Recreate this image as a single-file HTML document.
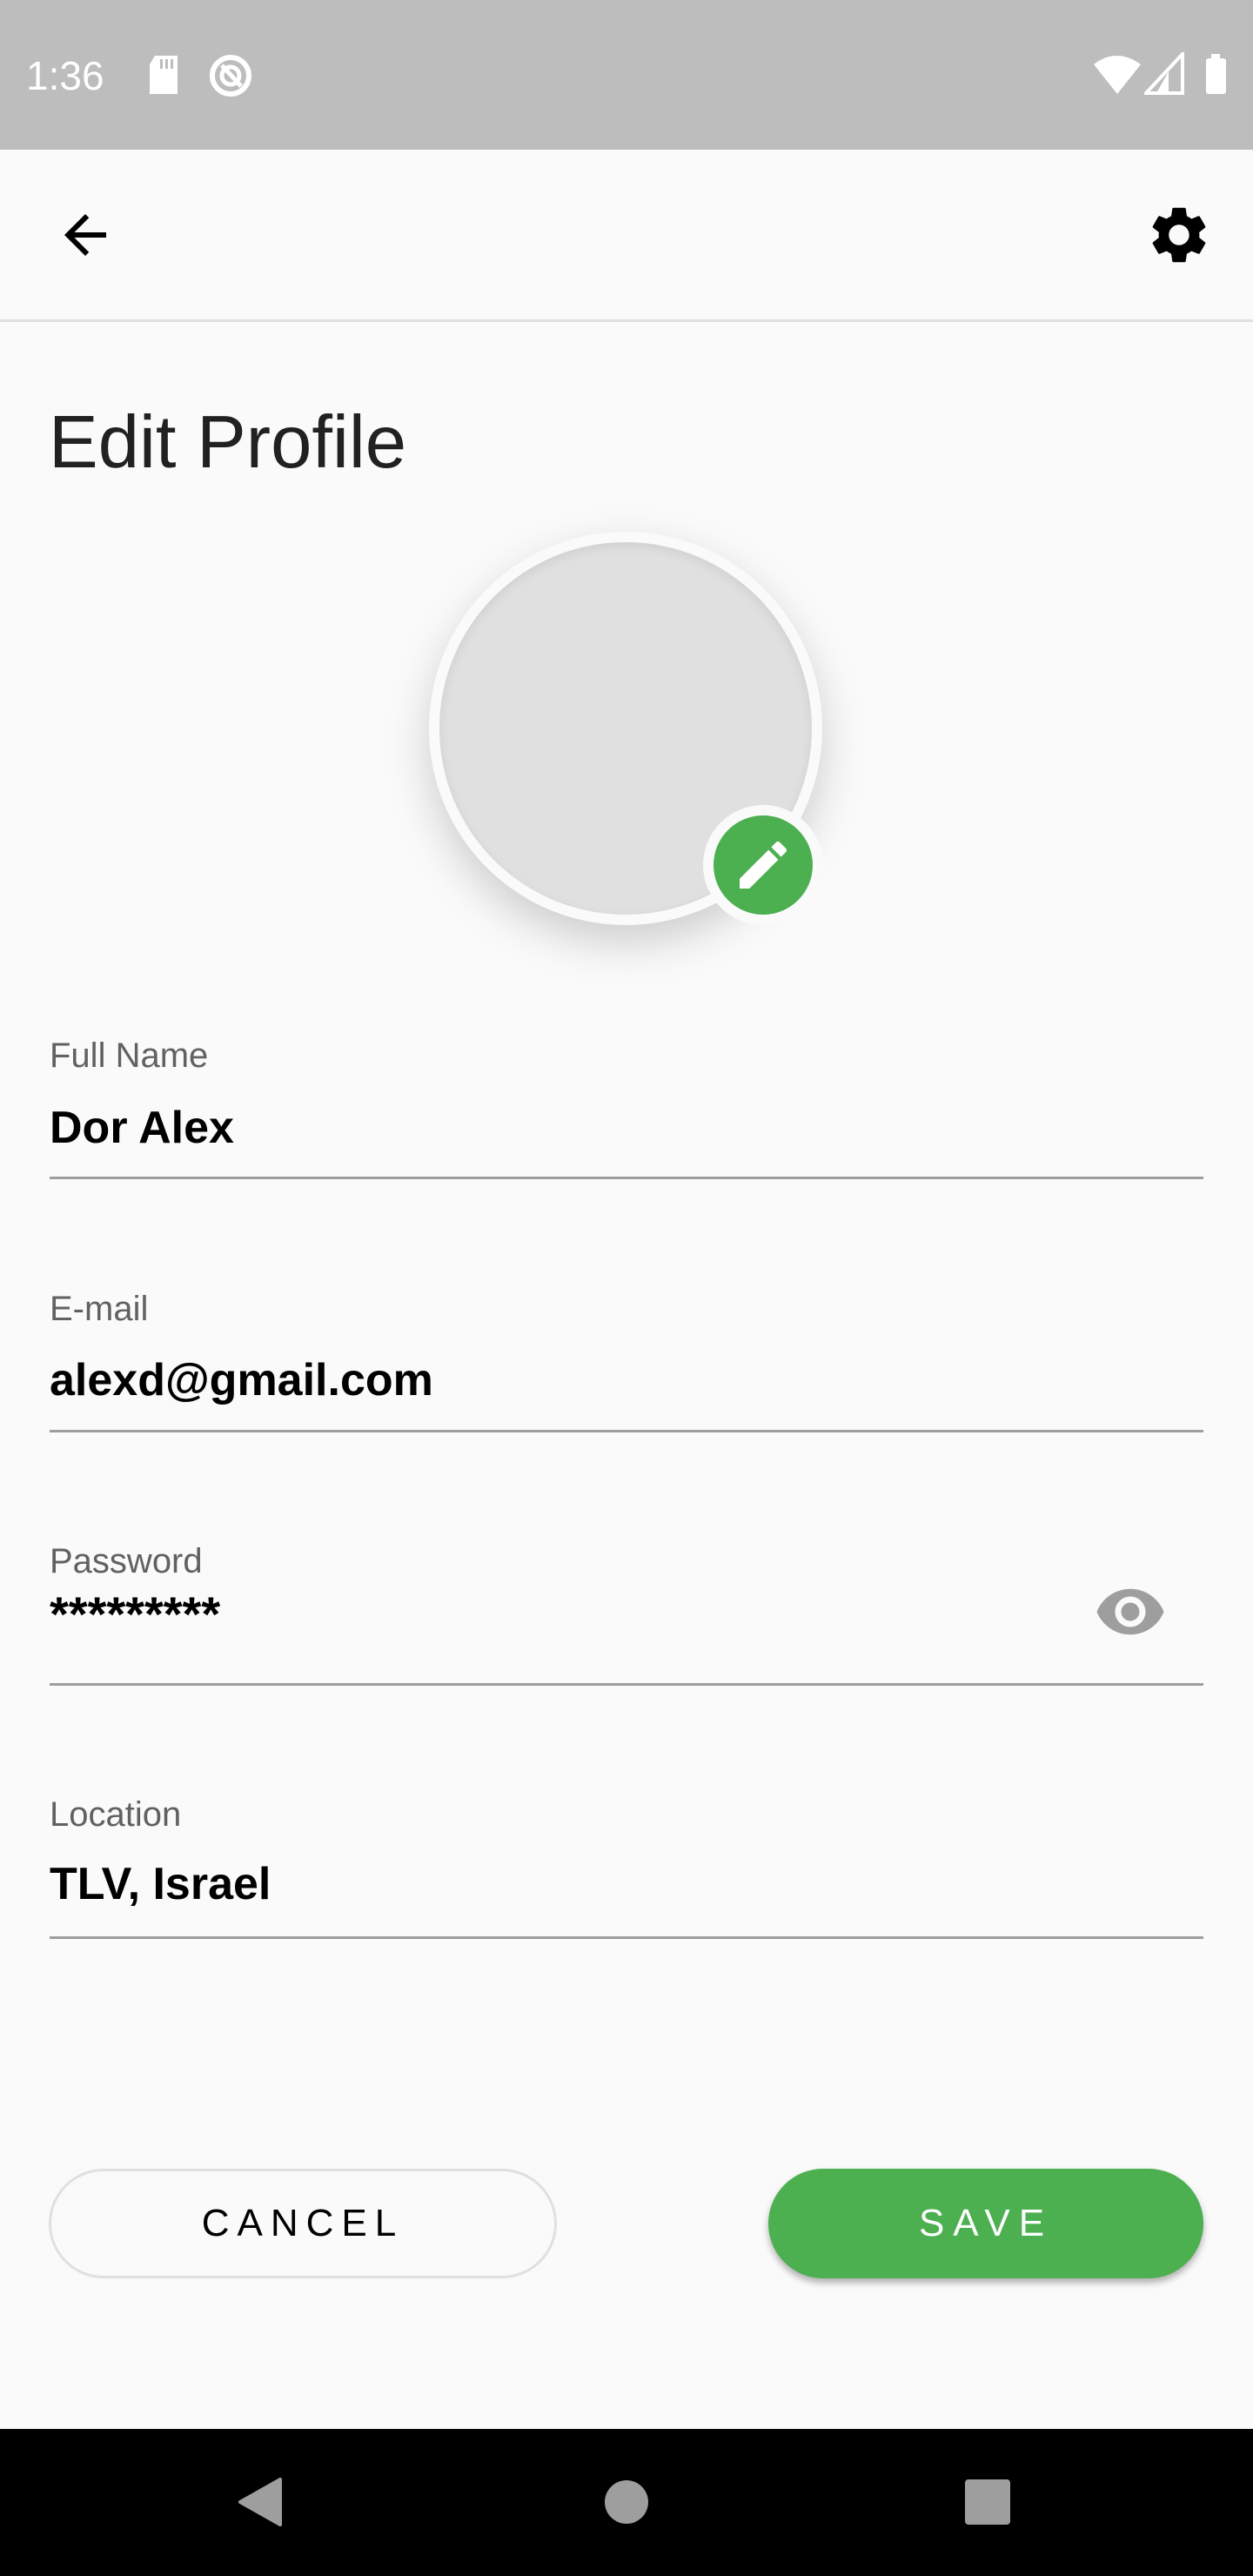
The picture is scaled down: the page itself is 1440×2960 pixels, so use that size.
<!DOCTYPE html>
<html><head><meta charset="utf-8"><style>
*{margin:0;padding:0;box-sizing:border-box}
body{width:1440px;height:2960px;background:#fafafa;position:relative;overflow:hidden;font-family:"Liberation Sans",Arial,sans-serif}
.a{position:absolute}
.lbl{position:absolute;left:57px;font-size:40px;line-height:40px;color:#616161;white-space:nowrap}
.val{position:absolute;left:57px;font-size:52px;line-height:52px;font-weight:bold;color:#000;white-space:nowrap}
.ln{position:absolute;left:57px;width:1326px;height:3px;background:#9e9e9e}
</style></head><body>
<div class="a" style="left:0;top:0;width:1440px;height:172px;background:#bdbdbd"></div>
<div class="a" style="left:30px;top:64px;font-size:46px;line-height:46px;color:#fff">1:36</div>
<svg class="a" style="left:168px;top:62px" width="40" height="48" viewBox="0 0 40 48"><path d="M10 2h26v44H4V12z" fill="#fff"/><rect x="16" y="6" width="3" height="11" fill="#bdbdbd"/><rect x="22" y="6" width="3" height="11" fill="#bdbdbd"/><rect x="28" y="6" width="3" height="11" fill="#bdbdbd"/></svg>
<svg class="a" style="left:238px;top:60px" width="54" height="54" viewBox="0 0 54 54"><circle cx="27" cy="27" r="21" fill="none" stroke="#fff" stroke-width="6"/><circle cx="27" cy="27" r="10" fill="none" stroke="#fff" stroke-width="5"/><path d="M17 15L39 39" stroke="#fff" stroke-width="5"/></svg>
<svg class="a" style="left:1255px;top:62px" width="60" height="48" viewBox="0 0 60 48"><path d="M2 12Q28 -8 56 12L29 46z" fill="#fff"/></svg>
<svg class="a" style="left:1315px;top:60px" width="48" height="50" viewBox="0 0 48 50"><path d="M44 2V47H2z" fill="none" stroke="#fff" stroke-width="4"/><path d="M28 22V47H14z" fill="#fff"/></svg>
<svg class="a" style="left:1382px;top:60px" width="32" height="50" viewBox="0 0 32 50"><rect x="10" y="2" width="10" height="6" fill="#fff"/><rect x="4" y="7" width="23" height="41" rx="3" fill="#fff"/></svg>
<div class="a" style="left:0;top:172px;width:1440px;height:196px;background:#fafafa"></div>
<div class="a" style="left:0;top:367px;width:1440px;height:3px;background:#e0e0e0"></div>
<svg class="a" style="left:62px;top:234px" width="72" height="72" viewBox="0 0 24 24"><path d="M20 11H7.83l5.59-5.59L12 4l-8 8 8 8 1.41-1.41L7.83 13H20v-2z" fill="#000"/></svg>
<svg class="a" style="left:1316px;top:231px" width="78" height="78" viewBox="0 0 24 24"><path fill="#000" d="M19.14,12.94c0.04-0.3,0.06-0.61,0.06-0.94c0-0.32-0.02-0.64-0.07-0.94l2.03-1.58c0.18-0.14,0.23-0.41,0.12-0.61l-1.92-3.32c-0.12-0.22-0.37-0.29-0.59-0.22l-2.39,0.96c-0.5-0.38-1.03-0.7-1.620-0.94L14.4,2.81c-0.04-0.24-0.24-0.41-0.48-0.41h-3.84c-0.24,0-0.43,0.17-0.47,0.41L9.25,5.35C8.66,5.59,8.12,5.920,7.63,6.29L5.24,5.33c-0.22-0.08-0.47,0-0.59,0.22L2.74,8.87C2.62,9.08,2.66,9.34,2.86,9.48l2.03,1.58C4.84,11.36,4.8,11.69,4.8,12s0.02,0.64,0.07,0.94l-2.03,1.58c-0.18,0.14-0.23,0.41-0.12,0.61l1.92,3.32c0.12,0.22,0.37,0.29,0.59,0.22l2.39-0.96c0.5,0.38,1.03,0.7,1.62,0.94l0.36,2.54c0.05,0.24,0.24,0.41,0.48,0.41h3.84c0.24,0,0.44-0.17,0.47-0.41l0.36-2.54c0.59-0.24,1.130-0.56,1.62-0.94l2.39,0.96c0.22,0.08,0.47,0,0.59-0.22l1.92-3.32c0.12-0.22,0.07-0.47-0.12-0.61L19.14,12.94z M12,15.6c-1.98,0-3.6-1.62-3.6-3.6s1.62-3.6,3.6-3.6s3.6,1.62,3.6,3.6S13.98,15.6,12,15.6z"/></svg>
<div class="a" style="left:56px;top:466px;font-size:85px;line-height:85px;color:#212121;white-space:nowrap">Edit Profile</div>
<div class="a" style="left:493px;top:611px;width:452px;height:452px;border-radius:50%;background:#fafafa;box-shadow:0 20px 50px rgba(0,0,0,0.18)"></div>
<div class="a" style="left:505px;top:623px;width:428px;height:428px;border-radius:50%;background:#e0e0e0;box-shadow:inset 0 4px 12px rgba(0,0,0,0.08)"></div>
<div class="a" style="left:808px;top:925px;width:138px;height:138px;border-radius:50%;background:#fafafa"></div>
<div class="a" style="left:820px;top:937px;width:114px;height:114px;border-radius:50%;background:#4caf50"></div>
<svg class="a" style="left:841px;top:958px" width="72" height="72" viewBox="0 0 24 24"><path fill="#fff" d="M3 17.25V21h3.75L17.81 9.94l-3.75-3.75L3 17.25zM20.71 7.04c.39-.39.39-1.02 0-1.41l-2.34-2.34c-.39-.39-1.020-.39-1.41 0l-1.83 1.83 3.75 3.75 1.83-1.83z"/></svg>
<div class="lbl" style="top:1193px">Full Name</div>
<div class="val" style="top:1270px">Dor Alex</div>
<div class="ln" style="top:1352px"></div>
<div class="lbl" style="top:1484px">E-mail</div>
<div class="val" style="top:1560px">alexd@gmail.com</div>
<div class="ln" style="top:1643px"></div>
<div class="lbl" style="top:1774px">Password</div>
<div class="a" style="left:57px;top:1827px;font-size:56px;line-height:56px;font-weight:bold;color:#000">*********</div>
<svg class="a" style="left:1257px;top:1810px" width="84" height="84" viewBox="0 0 24 24"><path fill="#9e9e9e" d="M12 4.5C7 4.5 2.73 7.61 1 12c1.730 4.39 6 7.5 11 7.5s9.27-3.11 11-7.5c-1.73-4.39-6-7.5-11-7.5zM12 17c-2.76 0-5-2.24-5-5s2.24-5 5-5 5 2.24 5 5-2.24 5-5 5zm0-8c-1.66 0-3 1.34-3 3s1.34 3 3 3 3-1.34 3-3-1.34-3-3-3z"/></svg>
<div class="ln" style="top:1934px"></div>
<div class="lbl" style="top:2065px">Location</div>
<div class="val" style="top:2139px">TLV, Israel</div>
<div class="ln" style="top:2225px"></div>
<div class="a" style="left:56px;top:2492px;width:584px;height:126px;border-radius:63px;border:3px solid #e0e0e0;background:#fafafa;display:flex;align-items:center;justify-content:center;font-size:44px;letter-spacing:9px;color:#000">CANCEL</div>
<div class="a" style="left:883px;top:2492px;width:500px;height:126px;border-radius:63px;background:#4caf50;box-shadow:0 5px 8px rgba(0,0,0,0.3);display:flex;align-items:center;justify-content:center;font-size:44px;letter-spacing:10px;color:#fff">SAVE</div>
<div class="a" style="left:0;top:2791px;width:1440px;height:169px;background:#000"></div>
<svg class="a" style="left:272px;top:2845px" width="56" height="60" viewBox="0 0 56 60"><path d="M50 4V56L4 30z" fill="#9e9e9e" stroke="#9e9e9e" stroke-width="4" stroke-linejoin="round"/></svg>
<div class="a" style="left:695px;top:2850px;width:50px;height:50px;border-radius:50%;background:#9e9e9e"></div>
<div class="a" style="left:1109px;top:2849px;width:52px;height:52px;border-radius:4px;background:#9e9e9e"></div>
</body></html>
